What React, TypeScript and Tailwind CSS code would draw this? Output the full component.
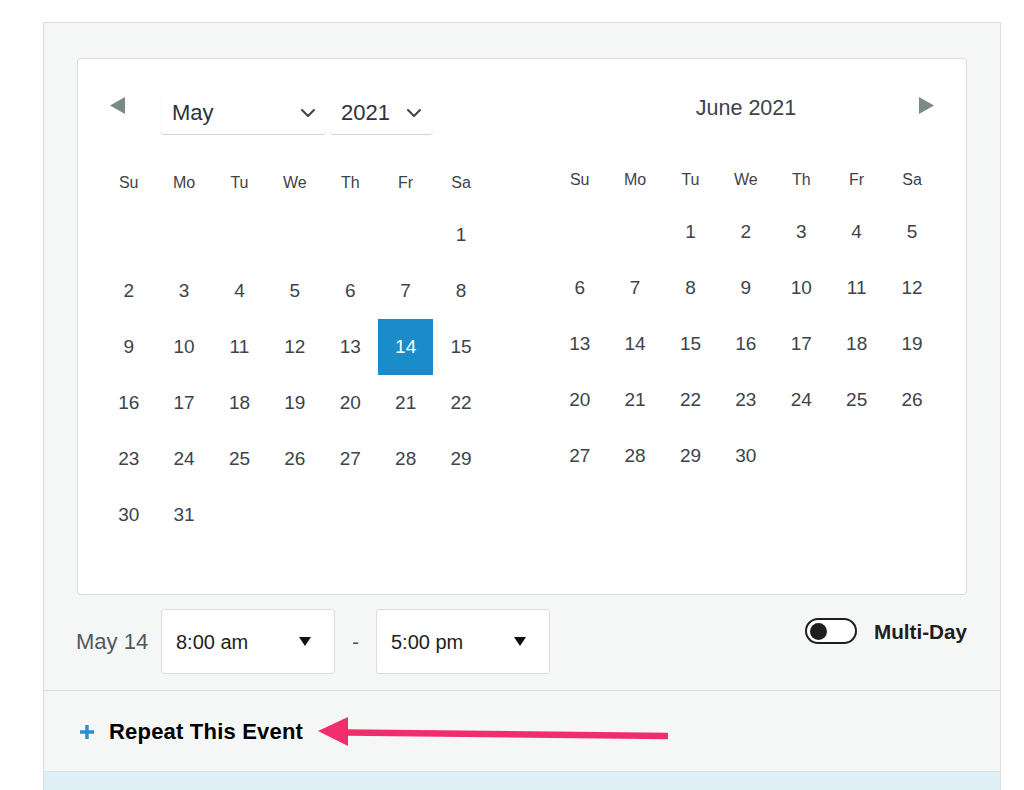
import React from 'react';

const WEEKDAYS = ['Su', 'Mo', 'Tu', 'We', 'Th', 'Fr', 'Sa'];

// Builds the list of cells for a month (null = empty leading cell)
const buildMonth = (offset: number, days: number) => {
  const cells: (number | null)[] = [];
  for (let i = 0; i < offset; i++) cells.push(null);
  for (let d = 1; d <= days; d++) cells.push(d);
  return cells;
};

const MonthGrid: React.FC<{ cells: (number | null)[]; selected?: number }> = ({ cells, selected }) => (
  <div className="grid grid-cols-[repeat(7,55.4px)]">
    {cells.map((d, i) => (
      <div
        key={i}
        className={
          d === selected
            ? 'h-[56px] flex items-center justify-center bg-[#1a8cca] text-white text-[19px]'
            : 'h-[56px] flex items-center justify-center text-[#3c434a] text-[19px]'
        }
      >
        {d ?? ''}
      </div>
    ))}
  </div>
);

const WeekdayRow: React.FC = () => (
  <div className="grid grid-cols-[repeat(7,55.4px)] h-[28px]">
    {WEEKDAYS.map((w) => (
      <div key={w} className="flex items-center justify-center text-[16px] text-[#3c434a]">
        {w}
      </div>
    ))}
  </div>
);

const Chevron: React.FC = () => (
  <svg width="16" height="10" viewBox="0 0 16 10" fill="none">
    <path d="M2 2l6 6 6-6" stroke="#3c434a" strokeWidth="2" strokeLinecap="round" strokeLinejoin="round" />
  </svg>
);

const Caret: React.FC = () => (
  <svg width="12" height="9" viewBox="0 0 12 9">
    <path d="M0 0h12L6 9z" fill="#111" />
  </svg>
);

const TimeSelect: React.FC<{ value: string }> = ({ value }) => (
  <div className="w-[174px] h-[65px] bg-white border border-[#dcdcde] rounded-[3px] flex items-center justify-between pl-[14px] pr-[23px]">
    <span className="text-[20px] text-[#1e1e1e]">{value}</span>
    <Caret />
  </div>
);

export default function App() {
  const may = buildMonth(6, 31);
  const june = buildMonth(2, 30);

  return (
    <div className="relative w-[1024px] h-[790px] overflow-hidden bg-white font-['Liberation_Sans',Arial,sans-serif]">
      <div className="ml-[43px] mt-[22px] w-[958px] border border-[#dcdcde] bg-[#f5f6f6]">
        {/* Date picker section */}
        <div className="pt-[35px] pl-[33px] pr-[33px] pb-[16px]">
          <div className="bg-white border border-[#dcdcde] rounded-[4px] pl-[23px] pr-[24px] pt-[32px] pb-[51px] flex gap-[63px]">
            {/* May */}
            <div className="w-[388px]">
              <div className="h-[43px] flex items-center">
                <svg className="ml-[9px] -mt-[14px]" width="15" height="17" viewBox="0 0 15 17">
                  <path d="M15 0v17L0 8.5z" fill="#7a8a87" />
                </svg>
                <div className="ml-[36px] w-[165px] h-[43px] bg-white rounded-[4px] shadow-[0_1px_1px_rgba(0,0,0,0.18)] flex items-center justify-between pl-[11px] pr-[10px]">
                  <span className="text-[22px] text-[#2c3338]">May</span>
                  <Chevron />
                </div>
                <div className="ml-[4px] w-[103px] h-[43px] bg-white rounded-[4px] shadow-[0_1px_1px_rgba(0,0,0,0.18)] flex items-center justify-between pl-[11px] pr-[11px]">
                  <span className="text-[22px] text-[#2c3338]">2021</span>
                  <Chevron />
                </div>
              </div>
              <div className="mt-[35px]">
                <WeekdayRow />
              </div>
              <div className="mt-[10px]">
                <MonthGrid cells={may} selected={14} />
              </div>
            </div>

            {/* June */}
            <div className="w-[388px]">
              <div className="relative h-[34px] flex items-center justify-center">
                <span className="text-[21.5px] text-[#3c434a]">June 2021</span>
                <svg className="absolute left-[367px] top-[6px]" width="15" height="17" viewBox="0 0 15 17">
                  <path d="M0 0v17L15 8.5z" fill="#7a8a87" />
                </svg>
              </div>
              <div className="mt-[41px]">
                <WeekdayRow />
              </div>
              <div className="mt-[10px]">
                <MonthGrid cells={june} />
              </div>
            </div>
          </div>

          {/* Time row */}
          <div className="mt-[14px] flex items-center justify-between">
            <div className="flex items-center -ml-[1px]">
              <span className="text-[22px] text-[#50575e] w-[85px]">May 14</span>
              <TimeSelect value="8:00 am" />
              <span className="w-[41px] text-center text-[20px] text-[#50575e]">-</span>
              <TimeSelect value="5:00 pm" />
            </div>
            <div className="flex items-center gap-[17px] -mt-[20px]">
              <div className="w-[52px] h-[26px] rounded-full border-2 border-[#1e1e1e] bg-white flex items-center pl-[3px]">
                <div className="w-[17px] h-[17px] rounded-full bg-[#1e1e1e]" />
              </div>
              <span className="text-[20.7px] font-bold text-[#1e1e1e]">Multi-Day</span>
            </div>
          </div>
        </div>

        {/* Repeat section */}
        <div className="border-t border-[#dcdcde] h-[81px] flex items-center pl-[35px] pt-[1px]">
          <svg width="16" height="16" viewBox="0 0 16 16">
            <path d="M8 1v14M1 8h14" stroke="#2a8fcb" strokeWidth="3.4" />
          </svg>
          <span className="ml-[14px] text-[22px] font-bold text-black tracking-[0.2px]">Repeat This Event</span>
        </div>

        {/* Next section strip */}
        <div className="h-[40px] bg-[#e0f0f7] border-t border-[#d6e4ea]" />
      </div>

      {/* Annotation arrow */}
      <svg className="absolute left-0 top-0 pointer-events-none" width="1024" height="790" viewBox="0 0 1024 790">
        <path d="M346 732.5 L668 736" stroke="#ef2e6b" strokeWidth="6.5" />
        <path d="M318 731 L348 717 L348 746 Z" fill="#ef2e6b" />
      </svg>
    </div>
  );
}
